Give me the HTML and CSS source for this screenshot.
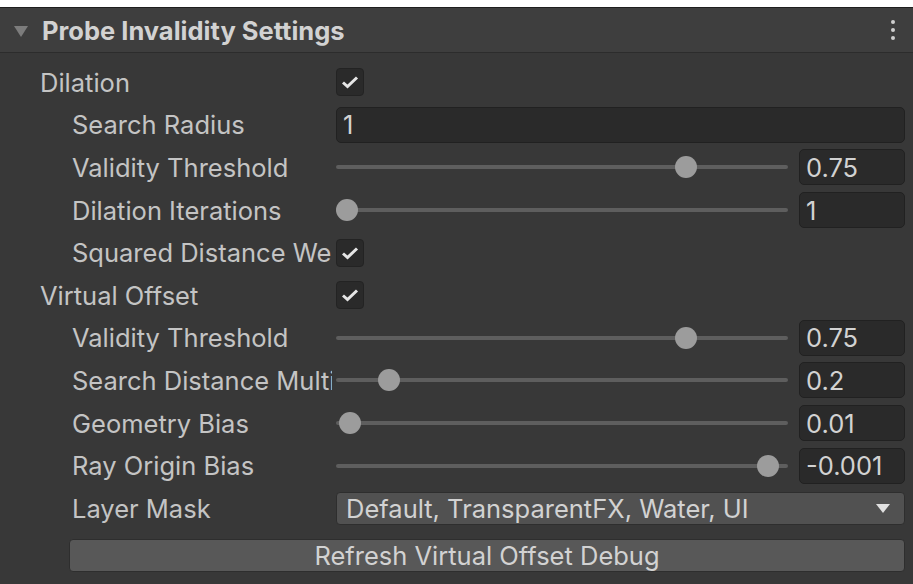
FILE: index.html
```html
<!DOCTYPE html>
<html>
<head>
<meta charset="utf-8">
<link rel="stylesheet" href="styles.css">
</head>
<body>
<div class="panel">
  <div class="header">
    <svg class="fold" width="14" height="11" viewBox="0 0 14 11"><polygon points="0,0 14,0 7,11" fill="#7c7c7c"/></svg>
    <span class="title">Probe Invalidity Settings</span>
    <span class="menu"><i></i><i></i><i></i></span>
  </div>
  <div class="body">
    <div class="row l1"><span class="label">Dilation</span><div class="ctl"><span class="check"><svg width="18" height="14" viewBox="0 0 18 14"><polyline points="2,7.5 6.5,11.5 16,2.5" fill="none" stroke="#e6e6e6" stroke-width="3"/></svg></span></div></div>
    <div class="row l2"><span class="label">Search Radius</span><div class="ctl"><span class="field wide">1</span></div></div>
    <div class="row l2"><span class="label">Validity Threshold</span><div class="ctl"><div class="slider"><div class="track"></div><span class="thumb" style="left:339px"></span></div><span class="field num">0.75</span></div></div>
    <div class="row l2"><span class="label">Dilation Iterations</span><div class="ctl"><div class="slider"><div class="track"></div><span class="thumb" style="left:0px"></span></div><span class="field num">1</span></div></div>
    <div class="row l2"><span class="label">Squared Distance Weighting</span><div class="ctl"><span class="check"><svg width="18" height="14" viewBox="0 0 18 14"><polyline points="2,7.5 6.5,11.5 16,2.5" fill="none" stroke="#e6e6e6" stroke-width="3"/></svg></span></div></div>
    <div class="row l1"><span class="label">Virtual Offset</span><div class="ctl"><span class="check"><svg width="18" height="14" viewBox="0 0 18 14"><polyline points="2,7.5 6.5,11.5 16,2.5" fill="none" stroke="#e6e6e6" stroke-width="3"/></svg></span></div></div>
    <div class="row l2"><span class="label">Validity Threshold</span><div class="ctl"><div class="slider"><div class="track"></div><span class="thumb" style="left:339px"></span></div><span class="field num">0.75</span></div></div>
    <div class="row l2"><span class="label">Search Distance Multiplier</span><div class="ctl"><div class="slider"><div class="track"></div><span class="thumb" style="left:42px"></span></div><span class="field num">0.2</span></div></div>
    <div class="row l2"><span class="label">Geometry Bias</span><div class="ctl"><div class="slider"><div class="track"></div><span class="thumb" style="left:3px"></span></div><span class="field num">0.01</span></div></div>
    <div class="row l2"><span class="label">Ray Origin Bias</span><div class="ctl"><div class="slider"><div class="track"></div><span class="thumb" style="left:421px"></span></div><span class="field num">-0.001</span></div></div>
    <div class="row l2"><span class="label">Layer Mask</span><div class="ctl"><div class="dropdown"><span>Default, TransparentFX, Water, UI</span><svg width="14" height="9" viewBox="0 0 14 9"><polygon points="0,0 14,0 7,9" fill="#e0e0e0"/></svg></div></div></div>
    <div class="btnrow"><button class="button">Refresh Virtual Offset Debug</button></div>
  </div>
</div>
</body>
</html>
```
FILE: styles.css
```css
html, body {
  margin: 0;
  padding: 0;
  background: #ffffff;
}
body {
  padding-top: 7px;
  font-family: Inter, "Noto Sans", sans-serif;
  font-size: 25.5px;
  color: #c4c4c4;
}
.panel {
  width: 913px;
  height: 577px;
  background: #383838;
  border-top: 1px solid #1f1f1f;
  box-sizing: border-box;
  overflow: hidden;
}
.header {
  height: 44px;
  background: #3e3e3e;
  border-bottom: 1px solid #2c2c2c;
  display: flex;
  align-items: center;
  padding-left: 14px;
  padding-right: 18px;
}
.fold {
  margin-top: 2px;
}
.title {
  font-weight: 700;
  color: #d2d2d2;
  margin-left: 14px;
  flex: 1;
}
.menu {
  display: flex;
  flex-direction: column;
  gap: 4px;
}
.menu i {
  display: block;
  width: 4px;
  height: 4px;
  border-radius: 50%;
  background: #cfcfcf;
}
.body {
  padding-top: 8px;
  display: flex;
  flex-direction: column;
}
.row {
  height: 42.6px;
  display: flex;
  align-items: center;
  padding-right: 8px;
}
.row.l1 { padding-left: 40px; }
.row.l2 { padding-left: 72px; }
.label {
  white-space: nowrap;
  overflow: hidden;
  flex: 0 0 auto;
  margin-right: 4px;
}
.row.l1 .label { width: 292px; }
.row.l2 .label { width: 260px; }
.ctl {
  flex: 1;
  display: flex;
  align-items: center;
  gap: 11px;
  height: 100%;
}
.check {
  width: 28px;
  height: 28px;
  border-radius: 4px;
  background: #2a2a2a;
  border: 1px solid #232323;
  box-sizing: border-box;
  display: flex;
  align-items: center;
  justify-content: center;
}
.field {
  height: 36px;
  box-sizing: border-box;
  background: #2a2a2a;
  border: 1px solid #212121;
  border-radius: 5px;
  display: flex;
  align-items: center;
  padding-left: 6px;
  color: #d2d2d2;
}
.field.wide { flex: 1; }
.field.num { width: 106px; flex: 0 0 106px; }
.slider {
  flex: 1;
  position: relative;
  height: 24px;
  display: flex;
  align-items: center;
}
.track {
  height: 4px;
  width: 100%;
  background: #5e5e5e;
  border-radius: 2px;
}
.thumb {
  position: absolute;
  top: 1px;
  width: 22px;
  height: 22px;
  border-radius: 50%;
  background: #9c9c9c;
}
.dropdown {
  flex: 1;
  height: 33px;
  box-sizing: border-box;
  background: #515151;
  border: 1px solid #2e2e2e;
  border-radius: 4px;
  display: flex;
  align-items: center;
  justify-content: space-between;
  padding-left: 9px;
  padding-right: 14px;
  color: #d2d2d2;
}
.btnrow {
  padding: 9px 8px 0 69px;
}
.button {
  width: 100%;
  height: 33px;
  background: #585858;
  border: 1px solid #2e2e2e;
  border-radius: 4px;
  font-family: inherit;
  font-size: 25.5px;
  color: #d2d2d2;
  padding: 0;
}
```
